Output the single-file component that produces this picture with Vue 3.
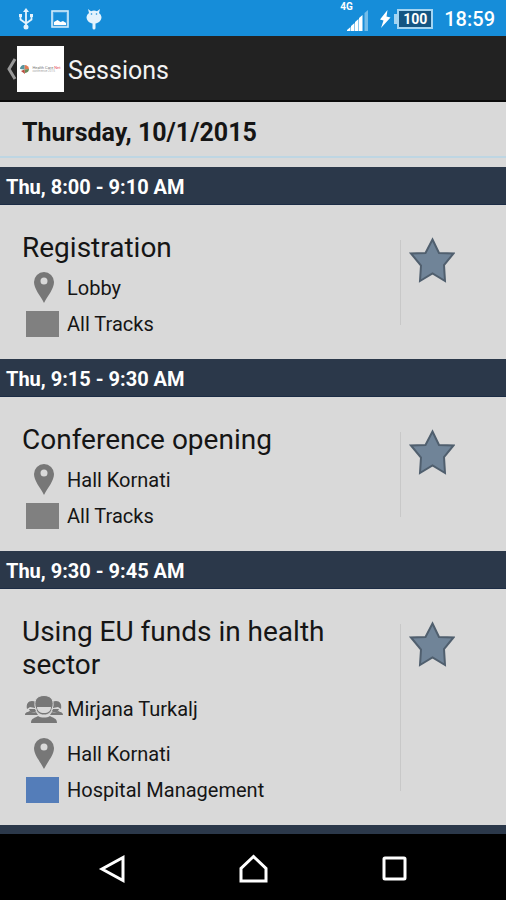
<script setup>
import { reactive } from 'vue'

const sessions = reactive([
  {
    time: 'Thu, 8:00 - 9:10 AM',
    title: 'Registration',
    place: 'Lobby',
    track: 'All Tracks',
    kind: 'general',
    starred: false,
  },
  {
    time: 'Thu, 9:15 - 9:30 AM',
    title: 'Conference opening',
    place: 'Hall Kornati',
    track: 'All Tracks',
    kind: 'general',
    starred: false,
  },
  {
    time: 'Thu, 9:30 - 9:45 AM',
    title: 'Using EU funds in health sector',
    speaker: 'Mirjana Turkalj',
    place: 'Hall Kornati',
    track: 'Hospital Management',
    kind: 'hospital',
    starred: false,
  },
])
</script>

<template>
  <div class="screen">
    <div class="status">
      <div class="status-group notices">
        <svg width="16" height="22" viewBox="0 0 16 22" fill="none" stroke="#e4f3fd" stroke-width="1.8">
          <path d="M8 3v16M2.500 8v3.500L8 15.500M13.500 7v4.500L8 15.500" />
          <path d="M8 0l3 4H5zM1 6h3v3H1zM12 6h3v3h-3z" fill="#e4f3fd" stroke="none" />
          <circle cx="8" cy="19" r="2.500" fill="#e4f3fd" stroke="none" />
        </svg>
        <svg width="18" height="18" viewBox="0 0 18 18">
          <rect x="1" y="1" width="16" height="16" fill="#3f9fe0" stroke="#d3ebfb" stroke-width="1.600" />
          <rect x="3" y="3" width="12" height="9" fill="#168dd9" />
          <path d="M3 15v-3l3.500-2 3 2 2.500-1 3 2v2z" fill="#fff" />
        </svg>
        <svg width="16" height="22" viewBox="0 0 16 22" fill="#e4f3fd">
          <path d="M2 1l3 2.200a7 7 0 0 1 6 0L14 1l-1 4a7 6 0 0 1 2.500 4c0 3.500-3 6-6 6.500v4.500a1.500 1.500 0 0 1-3 0v-4.500C3.500 15 .5 12.500.5 9A7 6 0 0 1 3 5z" />
          <circle cx="5.500" cy="6" r=".8" fill="#168dd9" />
          <circle cx="10.500" cy="6" r=".8" fill="#168dd9" />
        </svg>
      </div>
      <div class="status-group">
        <div class="signal">
          <span class="network">4G</span>
          <svg width="22" height="21" viewBox="0 0 22 21">
            <path d="M0 21v-1l3.500-3v4zM4 21v-5l3.500-3v8zM8 21v-9l3.500-3v12zM12 21V8l3.500-3v16z" fill="#fff" />
            <path d="M17.500 21V3l3.500-3v21z" fill="#73bce9" />
          </svg>
        </div>
        <svg class="bolt" width="12" height="18" viewBox="0 0 12 18">
          <path d="M8.500 0L1 9.500l3.500 1L2 18l9.500-10.500-4-1z" fill="#fff" />
        </svg>
        <div class="battery">100</div>
        <time class="clock">18:59</time>
      </div>
    </div>

    <header class="toolbar">
      <button class="up" aria-label="Back">
        <svg width="11" height="24" viewBox="0 0 11 24">
          <path d="M9 2L3 12l6 10" fill="none" stroke="#999" stroke-width="3" />
        </svg>
        <span class="logo">
          <svg width="9" height="9" viewBox="0 0 9 9">
            <path d="M4.500 4.500V0A4.500 4 0 0 1 9 4z" fill="#e17b55" />
            <path d="M4.500 4.500L9 4a4.500 4 0 0 1-4 4z" fill="#678a58" />
            <path d="M4.500 4.500L5 9 1 6z" fill="#b84b3d" />
            <path d="M4.500 4.500L0 4a4 4 0 0 1 4.500-4z" fill="#55949d" />
          </svg>
          <span class="brand">Health Care <b>Net</b><small>conference 2015</small></span>
        </span>
      </button>
      <h1>Sessions</h1>
    </header>

    <main>
      <h2 class="date">Thursday, 10/1/2015</h2>
      <section v-for="session in sessions" :key="session.time">
        <h3 class="slot">{{ session.time }}</h3>
        <article class="session">
          <div class="details">
            <h4>{{ session.title }}</h4>
            <div v-if="session.speaker" class="row speaker">
              <svg width="38" height="28" viewBox="0 0 38 28" fill="#777">
                <path d="M2 14c-1-5 1-8 5-8 3 0 4 1 4 3l-1 4-5-1zM36 14c1-5-1-8-5-8-3 0-4 1-4 3l1 4 5-1z" />
                <path d="M4 14h6l1 2c-1 2-5 2-6 0zM34 14h-6l-1 2c1 2 5 2 6 0z" />
                <path d="M0 20c0-3 3-3 5-4 2 2 4 2 6 1l2 3zM38 20c0-3-3-3-5-4-2 2-4 2-6 1l-2 3z" />
                <path d="M10 11C9 4 13 .5 19 .5S29 4 28 11l-1 3c-1 4-4 6-8 6s-7-2-8-6z" stroke="#d9d9d9" />
                <path d="M12 12h14c0 4-3 6-7 6s-7-2-7-6z" fill="#d9d9d9" />
                <path d="M6 28c0-5 4-5 7-7 3 2 9 2 12 0 3 2 7 2 7 7z" />
              </svg>
              <span>{{ session.speaker }}</span>
            </div>
            <div class="row">
              <svg width="38" height="32" viewBox="0 0 38 32">
                <path fill="#777" fill-rule="evenodd" d="M19 0a10 10 0 0 0-10 10c0 7 6 13 10 21 4-8 10-14 10-21A10 10 0 0 0 19 0zm0 5.500a3.500 3.500 0 1 1 0 7 3.500 3.500 0 0 1 0-7z" />
              </svg>
              <span>{{ session.place }}</span>
            </div>
            <div class="row">
              <span class="swatch" :class="session.kind"></span>
              <span>{{ session.track }}</span>
            </div>
          </div>
          <div class="favorite">
            <button
              :aria-label="'Favorite ' + session.title"
              :aria-pressed="session.starred"
              @click="session.starred = !session.starred"
            >
              <svg width="46" height="46" viewBox="0 0 46 46">
                <path class="star" d="M23.500 2.500l6.500 13.500 14.500.5L35 28l1 16-12.500-7.500L11 44l1-15.500L2 16.500l14.500-.5z" />
              </svg>
            </button>
          </div>
        </article>
      </section>
      <div class="next-slot"></div>
    </main>

    <nav class="navigation" aria-label="System">
      <button aria-label="Back">
        <svg width="30" height="30" viewBox="0 0 30 30"><path d="M26 3.500v23L5 15z" /></svg>
      </button>
      <button aria-label="Home">
        <svg width="30" height="30" viewBox="0 0 30 30"><path d="M15.500 2.500l-12.500 12V27h25V14.500z" /></svg>
      </button>
      <button aria-label="Recent apps">
        <svg width="30" height="30" viewBox="0 0 30 30"><rect x="5" y="4" width="21" height="21" rx="1" /></svg>
      </button>
    </nav>
  </div>
</template>

<style>
body {
  margin: 0;
  background: #000;
}
</style>

<style scoped>
.screen {
  display: flex;
  flex-direction: column;
  min-height: 100vh;
  background: #d9d9d9;
  color: #151515;
  font-family: Roboto, sans-serif;
}
* {
  box-sizing: border-box;
}
svg {
  display: block;
  flex: none;
}
h1, h2, h3, h4 {
  margin: 0;
}
button {
  padding: 0;
  border: 0;
  background: none;
  color: inherit;
  font: inherit;
  cursor: pointer;
}
.status {
  display: flex;
  align-items: center;
  justify-content: space-between;
  height: 36px;
  padding: 2px 11px 0 18px;
  background: #168dd9;
  color: #fff;
}
.status-group {
  display: flex;
  align-items: center;
}
.notices {
  gap: 17px;
}
.signal {
  position: relative;
  display: flex;
  align-items: flex-end;
  height: 24px;
  padding-left: 7px;
}
.network {
  position: absolute;
  top: -6px;
  left: 0;
  font-size: 10px;
  font-weight: 700;
  line-height: 12px;
}
.bolt {
  margin: 0 2px 0 10px;
}
.battery {
  position: relative;
  width: 36px;
  height: 20px;
  margin-left: 4px;
  border: 2px solid #a4d5f2;
  background: #145582;
  font-size: 14px;
  font-weight: 700;
  line-height: 16px;
  text-align: center;
}
.battery::before {
  content: "";
  position: absolute;
  top: 3px;
  left: -5px;
  width: 3px;
  height: 10px;
  background: #a4d5f2;
}
.clock {
  margin-left: 11px;
  font-size: 20px;
  font-weight: 500;
}
.toolbar {
  display: flex;
  align-items: center;
  gap: 4px;
  height: 66px;
  padding: 2px 0 0 6px;
  border-bottom: 2px solid #0b0b0b;
  background: #222;
  color: #f3f3f3;
}
.up {
  display: flex;
  align-items: center;
}
.logo {
  display: flex;
  align-items: center;
  justify-content: center;
  gap: 3px;
  width: 47px;
  height: 46px;
  background: #fff;
}
.brand {
  color: #777;
  font-size: 4px;
  line-height: 5px;
  text-align: left;
  white-space: nowrap;
}
.brand b {
  color: #e54b59;
  font-weight: 400;
}
.brand small {
  display: block;
  color: #aaa;
  font-size: 3px;
  line-height: 3px;
}
h1 {
  padding-top: 2px;
  font-size: 25px;
  font-weight: 400;
}
main {
  flex: 1;
}
.date {
  height: 56px;
  padding: 0 22px;
  border-bottom: 2px solid #bed6e3;
  font-size: 25px;
  font-weight: 700;
  line-height: 62px;
}
.date + section {
  padding-top: 9px;
}
.slot {
  height: 38px;
  padding: 0 6px;
  border-bottom: 1px solid #1c2c45;
  background: #2b384a;
  color: #fff;
  font-size: 20px;
  font-weight: 700;
  line-height: 40px;
}
.session {
  display: grid;
  grid-template-columns: minmax(0, 1fr) 106px;
  padding: 26px 0 17px 22px;
}
.details {
  padding-right: 24px;
}
h4 {
  padding-bottom: 6px;
  font-size: 28px;
  font-weight: 400;
  line-height: 33px;
}
.row {
  display: flex;
  align-items: center;
  gap: 4px;
  min-height: 36px;
  padding-left: 3px;
  font-size: 20px;
}
.row.speaker {
  min-height: 44px;
  margin-bottom: 5px;
}
.swatch {
  flex: none;
  width: 33px;
  height: 26px;
  margin: 0 4px 0 1px;
}
.general {
  background: #808080;
}
.hospital {
  background: #547db9;
}
.favorite {
  margin: 9px 0 17px;
  border-left: 1px solid #c8c8c8;
  padding-left: 8px;
}
.favorite button {
  display: block;
  margin-top: -3px;
}
.star {
  fill: #708498;
  stroke: #505f6e;
  stroke-width: 2;
}
button[aria-pressed="true"] .star {
  fill: #e4b63c;
}
.next-slot {
  height: 9px;
  background: #2b384a;
}
.navigation {
  display: flex;
  justify-content: center;
  gap: 111px;
  padding: 20px 0 16px;
  background: #000;
}
.navigation svg {
  fill: none;
  stroke: #fff;
  stroke-width: 3;
}
</style>
